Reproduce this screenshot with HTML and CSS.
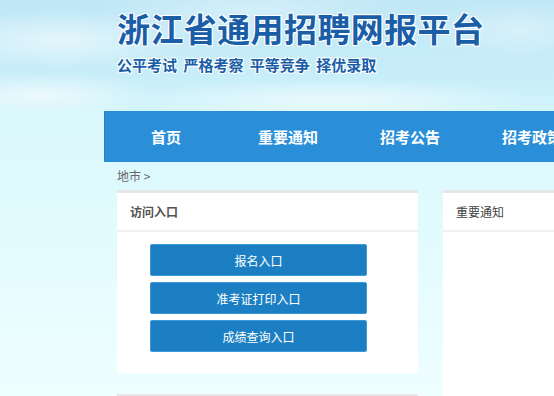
FILE: index.html
```html
<!DOCTYPE html>
<html lang="zh-CN">
<head>
    <meta charset="UTF-8">
    <meta name="viewport" content="width=device-width, initial-scale=1.0">
    <title>浙江省通用招聘网报平台</title>
    <link rel="stylesheet" href="styles.css">
</head>
<body>
    <header class="banner">
        <h1 class="banner__title">浙江省通用招聘网报平台</h1>
        <p class="banner__slogan">公平考试 严格考察 平等竞争 择优录取</p>
    </header>

    <nav class="menu">
        <a class="menu__item" href="#">首页</a>
        <a class="menu__item" href="#">重要通知</a>
        <a class="menu__item" href="#">招考公告</a>
        <a class="menu__item" href="#">招考政策</a>
    </nav>

    <main class="content">
        <div class="crumbs">地市 &gt;</div>

        <div class="content__row">
            <div class="content__col">
                <section class="panel panel--entry">
                    <h2 class="panel__head">访问入口</h2>
                    <div class="panel__body entry">
                        <a class="entry__btn" href="#">报名入口</a>
                        <a class="entry__btn" href="#">准考证打印入口</a>
                        <a class="entry__btn" href="#">成绩查询入口</a>
                    </div>
                </section>

                <section class="panel panel--next"></section>
            </div>

            <section class="panel panel--notice">
                <h2 class="panel__head">重要通知</h2>
                <div class="panel__body"></div>
            </section>
        </div>
    </main>
</body>
</html>
```

FILE: styles.css
```css
html,
body {
    height: 396px;
    overflow: hidden;
}

body {
    margin: 0;

    font-family: "Noto Sans CJK SC", "Liberation Sans", sans-serif;

    background: linear-gradient(180deg, #d3f5fc 0%, #e2fbfe 60%, #effeff 100%);
}

.banner {
    height: 111px;
    box-sizing: border-box;
    padding: 7px 0 0 117px;

    background:
        radial-gradient(ellipse 140px 30px at 60px 40px, rgba(255, 255, 255, 0.55), transparent),
        radial-gradient(ellipse 120px 24px at 40px 95px, rgba(255, 255, 255, 0.6), transparent),
        radial-gradient(ellipse 200px 22px at 330px 100px, rgba(255, 255, 255, 0.55), transparent),
        radial-gradient(ellipse 110px 30px at 520px 30px, rgba(255, 255, 255, 0.35), transparent),
        radial-gradient(ellipse 160px 30px at 250px 10px, rgba(255, 255, 255, 0.3), transparent),
        linear-gradient(180deg, #bfe7f6 0%, #c8eef9 70%, #d3f5fc 100%);
}

.banner__title {
    margin: 0;

    font-size: 33px;
    line-height: 42px;
    font-weight: 700;
    letter-spacing: 0.4px;

    color: #1a5ea8;

    text-shadow:
        1px 1px 0 #fff, -1px -1px 0 #fff,
        1px -1px 0 #fff, -1px 1px 0 #fff;
}

.banner__slogan {
    margin: 5px 0 0;

    font-size: 15px;
    line-height: 22px;
    font-weight: 700;
    word-spacing: 3px;

    color: #1a5ea8;

    text-shadow:
        1px 1px 0 #fff, -1px -1px 0 #fff,
        1px -1px 0 #fff, -1px 1px 0 #fff;
}

.menu {
    margin-left: 104px;
    height: 51px;
    overflow: hidden;

    display: flex;

    background: #2a8fd8;
    border-left: 1px solid #2383c9;
}

.menu__item {
    flex: 0 0 122px;

    display: flex;
    align-items: center;
    justify-content: center;

    font-size: 15px;
    font-weight: 700;
    color: #fff;
    text-decoration: none;
    white-space: nowrap;
}

.content {
    padding: 0 0 0 117px;
}

.crumbs {
    height: 28px;

    font-size: 12px;
    line-height: 28px;

    color: #666;
}

.content__row {
    display: flex;
    align-items: flex-start;
    gap: 25px;
}

.content__col {
    flex: 0 0 301px;

    display: flex;
    flex-direction: column;
    gap: 21px;
}

.panel {
    background: #fff;
    border-top: 3px solid #e6e6e6;
}

.panel--notice {
    flex: 1 0 0;
    height: 210px;
}

.panel--next {
    height: 40px;
}

.panel__head {
    margin: 0;
    height: 39px;
    box-sizing: border-box;
    padding-left: 13px;

    border-bottom: 2px solid #f0f0f0;

    font-size: 12px;
    line-height: 37px;
    font-weight: 700;

    color: #555;
}

.panel--notice .panel__head {
    font-weight: 400;
    color: #444;
}

.entry {
    padding: 12px 0 21px 33px;

    display: flex;
    flex-direction: column;
    gap: 6px;
}

.entry__btn {
    width: 217px;
    height: 32px;
    box-sizing: border-box;

    display: flex;
    align-items: center;
    justify-content: center;

    border: 1px solid #3a98d6;
    border-radius: 2px;
    background: #1c7fc3;

    font-size: 12px;
    color: #fff;
    text-decoration: none;
}
```
